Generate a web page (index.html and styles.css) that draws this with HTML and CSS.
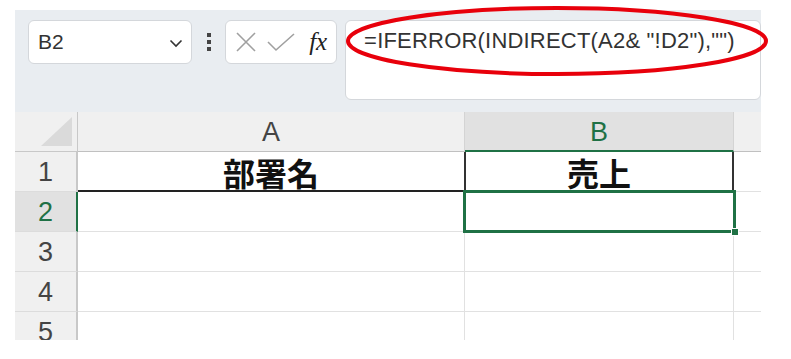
FILE: index.html
```html
<!DOCTYPE html>
<html lang="ja">
<head>
<meta charset="utf-8">
<link rel="stylesheet" href="styles.css">
</head>
<body>
<div class="stage">
  <div class="excel">
    <div class="toolbar">
      <div class="namebox">
        <span class="name">B2</span>
        <svg class="chev" width="14" height="9" viewBox="0 0 14 9"><path d="M1.5 1.5 L7 7 L12.5 1.5" fill="none" stroke="#333" stroke-width="1.6"/></svg>
      </div>
      <div class="dots"><i></i><i></i><i></i></div>
      <div class="fxbox">
        <svg width="22" height="22" viewBox="0 0 22 22"><path d="M2 2 L20 20 M20 2 L2 20" stroke="#a0a0a0" stroke-width="1.6" fill="none"/></svg>
        <svg width="28" height="22" viewBox="0 0 28 22"><path d="M1 11 L9 19 L27 3" stroke="#a0a0a0" stroke-width="1.6" fill="none"/></svg>
        <span class="fx">fx</span>
      </div>
      <div class="formula">=IFERROR(INDIRECT(A2&amp; "!D2"),"")</div>
    </div>
    <div class="grid">
      <div class="corner"><svg width="31" height="29" viewBox="0 0 31 29"><polygon points="31,0 31,29 0,29" fill="#dadada"/></svg></div>
      <div class="ch">A</div>
      <div class="ch sel">B</div>
      <div class="ch last"></div>

      <div class="rh">1</div>
      <div class="c a1 bold">部署名</div>
      <div class="c b1 bold">売上</div>
      <div class="c last"></div>

      <div class="rh sel">2</div>
      <div class="c"></div>
      <div class="c b2"></div>
      <div class="c last"></div>

      <div class="rh">3</div>
      <div class="c"></div>
      <div class="c"></div>
      <div class="c last"></div>

      <div class="rh">4</div>
      <div class="c"></div>
      <div class="c"></div>
      <div class="c last"></div>

      <div class="rh">5</div>
      <div class="c"></div>
      <div class="c"></div>
      <div class="c last"></div>

      <div class="selection"><span class="handle"></span></div>
    </div>
  </div>
  <svg class="ring" width="424" height="72" viewBox="0 0 424 72"><ellipse cx="212" cy="36" rx="209" ry="33" fill="none" stroke="#e8000b" stroke-width="4"/></svg>
</div>
</body>
</html>
```
FILE: styles.css
```css
* { box-sizing: border-box; }
html, body { margin: 0; padding: 0; background: #fff; }
body { font-family: "Liberation Sans", Arial, "Noto Sans CJK JP", sans-serif; }
.stage { position: relative; width: 791px; height: 359px; padding: 10px 0 0 15px; }
.excel { width: 746px; height: 330px; background: #e9edf1; overflow: hidden; }
.toolbar { height: 102px; display: flex; align-items: flex-start; padding: 10px 0 0 13px; }
.namebox { width: 166px; height: 44px; background: #fff; border: 1px solid #d4d7db; border-radius: 6px; display: flex; align-items: center; justify-content: space-between; padding: 0 8px 0 9px; }
.name { font-size: 21px; color: #333; }
.chev { margin-top: 2px; }
.dots { width: 33px; height: 44px; display: flex; flex-direction: column; align-items: center; justify-content: center; gap: 3px; }
.dots i { display: block; width: 4px; height: 4px; background: #444; }
.fxbox { width: 113px; height: 44px; background: #fff; border: 1px solid #d4d7db; border-radius: 6px; display: flex; align-items: center; padding: 0 0 0 9px; gap: 10px; }
.fx { font-family: "Liberation Serif", "DejaVu Serif", serif; font-style: italic; font-size: 25px; color: #222; margin-left: 4px; }
.formula { margin-left: 8px; width: 420px; height: 80px; background: #fff; border: 1px solid #d4d7db; border-radius: 6px; padding: 7px 0 0 18px; font-size: 22px; color: #333; white-space: nowrap; letter-spacing: 0.2px; }
.grid { position: relative; display: grid; grid-template-columns: 63px 387px 269px 27px; grid-template-rows: 40px repeat(5, 40px); background: #fff; }
.corner { background: #f0f0f0; border-right: 1px solid #c8c8c8; border-bottom: 1px solid #c8c8c8; display: flex; align-items: flex-end; justify-content: flex-end; padding: 0 5px 5px 0; }
.ch { background: #f0f0f0; border-right: 1px solid #d4d4d4; border-bottom: 1px solid #c0c0c0; font-size: 27px; color: #444; text-align: center; line-height: 40px; }
.ch.sel { background: #e1e1e1; color: #1f7145; border-bottom: 2px solid #1f7145; }
.ch.last { border-right: none; }
.rh { background: #f0f0f0; border-right: 2px solid #c8c8c8; border-bottom: 1px solid #dcdcdc; font-size: 27px; color: #444; text-align: center; line-height: 40px; }
.rh.sel { background: #e1e1e1; color: #1f7145; border-right: 2px solid #1f7145; }
.c { border-right: 1px solid #e1e1e1; border-bottom: 1px solid #e1e1e1; }
.c.last { border-right: none; }
.bold { font-family: "Noto Sans CJK JP", sans-serif; font-weight: 700; font-size: 32px; color: #111; text-align: center; line-height: 40px; }
.a1 { border-bottom: 2px solid #222; }
.b1 { border-left: 2px solid #333; border-right: 2px solid #333; margin-left: -1px; }
.selection { position: absolute; left: 448px; top: 78px; width: 273px; height: 43px; border: 3px solid #1f7145; pointer-events: none; }
.handle { position: absolute; right: -6px; bottom: -6px; width: 8px; height: 8px; background: #1f7145; border: 1px solid #fff; }
.ring { position: absolute; left: 345px; top: 5px; }
```
